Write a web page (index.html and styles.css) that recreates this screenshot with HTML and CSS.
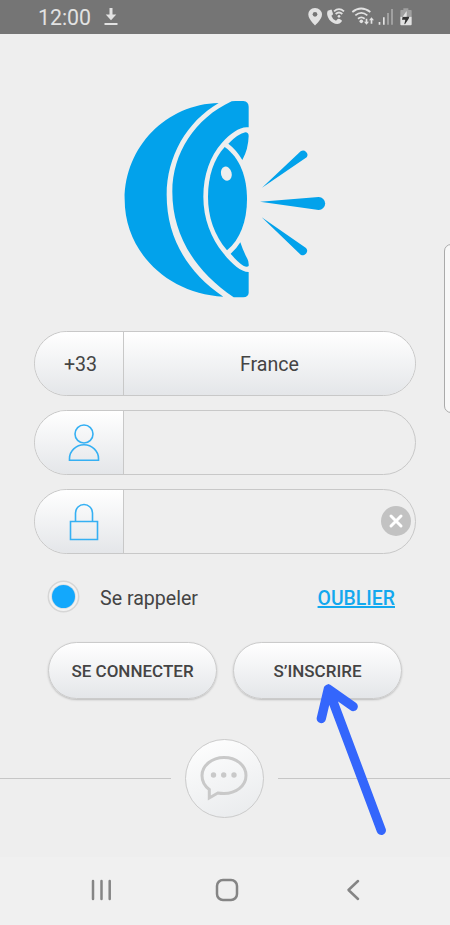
FILE: index.html
```html
<!DOCTYPE html>
<html lang="fr">
<head>
<meta charset="utf-8">
<title>Connexion</title>
<link rel="stylesheet" href="styles.css">
</head>
<body>
<div class="screen">
  <header class="status">
    <span class="clock">12:00</span>
    <svg class="download" width="14" height="20" viewBox="0 0 14 20"><path d="M5.500 1h3v6.500h3.800L7 13.300 1.700 7.500h3.800z"/><path d="M.5 16h13v2H.5z"/></svg>
    <svg class="indicators" width="130" height="34" viewBox="0 0 390 102">
      <path d="M75 24C62 24 55 33 55 44C55 57 75 76 75 76S96 57 96 44C96 33 87 24 75 24Z"/>
      <circle class="hole" cx="75" cy="43" r="7"/>
      <path d="M113 32L122 29Q125 28 126 32L129 41Q130 44 124 47Q127 57 138 62L143 57Q146 55 149 57L155 61Q157 63 154 66Q149 72 142 72Q128 71 118 59Q108 44 113 32Z"/>
      <g class="waves"><path d="M132 34Q147 21 162 34M137 42Q147 33 157 42"/><path d="M187 36Q213 15 241 36M196 46Q214 31 232 46M204 56Q214 48 224 56"/></g>
      <circle cx="147" cy="49" r="4"/><circle cx="214" cy="64" r="5.500"/>
      <path d="M227 56h5v9h5l-7.500 9-7.500-9h5zM242 71h5V61h5l-7.500-9-7.500 9h5z"/>
      <path d="M266 66h5v8h-5zM279 52h5v22h-5z"/>
      <path class="dim" d="M291 39h6v35h-6zM303 27h6v47h-6zM340 25h15v5h8q2 0 2 2v18h-34V32q0-2 2-2h7z"/>
      <path d="M331 50h34v23q0 3-3 3h-28q-3 0-3-3z"/>
      <path class="bolt" d="M338 50h20l-2 6-11 17-2-1 3-13h-10z"/><path d="M350 33l-12 17h12z"/>
    </svg>
  </header>
  <main>
    <svg class="logo" width="230" height="220" viewBox="0 0 690 660">
      <path d="M326 39C170 42 44 170 44 328C44 488 175 612 340 620C229 545 170 440 170 315C170 200 230 95 326 39Z"/>
      <path d="M365 34Q370 33 376 33H400Q416 35 416 50V112C392 108 362 129 336 158C300 198 280 255 280 320C280 385 303 445 340 490C365 521 392 546 416 546V609Q415 621 400 622H371C250 540 187 430 187 305C187 190 255 85 365 34Z"/>
      <path d="M344 171C390 203 411 262 411 328C411 393 390 450 351 481C312 434 294 380 294 320C294 260 311 207 344 171Z"/>
      <path d="M355 161Q385 131 406 127Q416 127 416 138Q415 177 397 210Q380 180 355 161Z"/>
      <path d="M362 491Q380 476 391 457Q400 485 412 506Q417 514 416 528Q411 533 400 527Q382 516 362 491Z"/>
      <ellipse class="glint" cx="349" cy="251" rx="16" ry="21.500" transform="rotate(-15 349 251)"/>
      <path d="M456 293L572 184A13 13 0 0 1 590 202Z"/>
      <path d="M450 335L626 321A19.500 19.500 0 1 1 626 360Z"/>
      <path d="M455 382L588 474A13 13 0 0 1 572 494Z"/>
    </svg>
    <div class="fields">
      <div class="field filled"><div class="lead">+33</div><div class="value">France</div></div>
      <div class="field"><div class="lead"><svg width="32" height="38" viewBox="0 0 32 38"><circle cx="16" cy="10" r="9"/><path d="M1.500 36.200v-1.700a14.500 13.700 0 0 1 29 0v1.700z"/></svg></div><div class="value"></div></div>
      <div class="field"><div class="lead"><svg width="32" height="38" viewBox="0 0 32 38"><path d="M7.500 18.500V10a8.500 8.500 0 0 1 17 0v8.500M2.500 18.500h27v18h-27z"/></svg></div><div class="value"></div>
        <svg class="clear" width="30" height="30" viewBox="0 0 30 30"><circle cx="15" cy="15" r="15"/><path d="M10 10l10 10M20 10L10 20"/></svg>
      </div>
    </div>
    <div class="options">
      <svg class="radio" width="34" height="34" viewBox="0 0 34 34"><circle class="rim" cx="16.500" cy="16.500" r="15.200"/><circle class="halo" cx="16.500" cy="16.500" r="12.300"/><circle class="dot" cx="16.500" cy="16.500" r="11.500"/></svg>
      <span class="remember">Se rappeler</span><a class="forgot">OUBLIER</a>
    </div>
    <div class="actions"><div class="button">SE CONNECTER</div><div class="button">S’INSCRIRE</div></div>
    <div class="chat-row">
      <span class="rule"></span>
      <div class="chat"><svg width="50" height="48" viewBox="0 0 50 48"><path d="M10.300 34.500V43l8.500-5Q21.500 38.500 25 38.500C37 38.500 47 30.800 47 20.500S37 2.500 25 2.500S3 10.500 3 20.500Q3 29 10.300 34.500Z"/><circle cx="14.500" cy="20" r="2.700"/><circle cx="24.700" cy="20" r="2.700"/><circle cx="35" cy="20" r="2.700"/></svg></div>
      <span class="rule"></span>
    </div>
  </main>
  <nav>
    <svg width="22" height="24" viewBox="0 0 22 24"><path d="M3 3v18M11.500 3v18M19.700 3v18"/></svg>
    <svg class="home" width="24" height="24" viewBox="0 0 24 24"><rect x="2" y="2" width="20" height="20" rx="6"/></svg>
    <svg width="14" height="24" viewBox="0 0 14 24"><path d="M12 3L2.500 12l9.500 9"/></svg>
  </nav>
  <div class="edge-panel"></div>
  <svg class="pointer" width="80" height="160" viewBox="0 0 80 160"><path d="M71.300 149.300L18.300 8L11.300 37.500M18.300 8L43.200 25.500"/></svg>
</div>
</body>
</html>
```

FILE: styles.css
```css
* { box-sizing: border-box; }
body { margin: 0; background: #eee; font-family: Roboto, sans-serif; color: #444; }
svg { display: block; flex: none; }
.screen { position: relative; width: 450px; height: 925px; overflow: hidden; display: flex; flex-direction: column; }
.status { height: 34px; flex: none; background: #757575; display: flex; align-items: center; padding-left: 38px; color: #e2e2e2; }
.clock { font-size: 21.300px; line-height: 34px; width: 66px; padding-top: 1px; }
.status svg { fill: #e2e2e2; }
.download { margin-top: -1px; }
.indicators { margin-left: auto; margin-right: 30px; }
.indicators .hole { fill: #757575; }
.indicators .dim { fill: #a0a0a0; }
.indicators .bolt { fill: #333; }
.indicators .waves { fill: none; stroke: #e2e2e2; stroke-width: 5.500; }
main { flex: 1; }
.logo { margin: 56px 0 0 110px; fill: #02a2eb; }
.glint { fill: #eee; }
.fields { margin: 21px 34px 0; display: flex; flex-direction: column; gap: 14px; }
.field { position: relative; height: 65px; display: flex; border: 1.500px solid #c8c8c8; border-radius: 33px; overflow: hidden; font-size: 19.600px; }
.lead { width: 89px; border-right: 1px solid #c8c8c8; background: linear-gradient(#fff, #e4e6e9); display: flex; align-items: center; justify-content: center; padding: 2px 0 0 3px; }
.lead svg { margin: -1px 0 0 7px; fill: none; stroke: #35b0f3; stroke-width: 1.600; }
.value { flex: 1; display: flex; align-items: center; justify-content: center; padding-top: 2px; }
.filled .value { background: linear-gradient(#fff, #e4e6e9); }
.clear { position: absolute; right: 4px; top: 16px; fill: #c2c2c2; stroke: none; }
.clear path { stroke: #fff; stroke-width: 3; stroke-linecap: round; }
.options { margin: 26px 55px 0 47px; height: 34px; display: flex; align-items: center; font-size: 19.600px; }
.rim { fill: #f2f2f2; stroke: #d6d6d6; stroke-width: 1.500; }
.halo { fill: #d3dde3; }
.dot { fill: #13a8fc; }
.remember { margin-left: 19px; padding-top: 2px; }
.forgot { margin-left: auto; padding-top: 3px; color: #13a8ee; font-weight: 500; font-size: 19.400px; text-decoration: underline; text-decoration-thickness: 1.500px; text-underline-offset: 1px; }
.actions { margin: 28px 48px 0; display: flex; gap: 16px; }
.button { flex: 1; height: 57px; border: 1px solid #cbcbcb; border-radius: 29px; background: linear-gradient(#fff, #e4e6e9); box-shadow: 0 1px 2px #bbb; display: flex; align-items: center; justify-content: center; font-size: 17px; font-weight: 500; }
.chat-row { margin-top: 40px; display: flex; align-items: center; justify-content: space-between; }
.rule { width: 171px; height: 1px; background: #c6c6c6; }
.rule:last-child { width: 172px; }
.chat { width: 79px; height: 79px; border: 1px solid #cbcbcb; border-radius: 50%; background: linear-gradient(160deg, #fff, #e8eaec); display: flex; align-items: center; justify-content: center; }
.chat svg { fill: #c9c9c9; margin-right: 1px; }
.chat path { fill: none; stroke: #c9c9c9; stroke-width: 3; }
nav { height: 68px; flex: none; background: #f0f0f0; display: flex; align-items: center; justify-content: space-between; padding: 0 90px 3px; }
nav svg { fill: none; stroke: #858585; stroke-width: 2.500; stroke-linecap: round; stroke-linejoin: round; }
nav .home { margin: 0 2px 0 -2px; }
.edge-panel { position: absolute; left: 444px; top: 244px; width: 20px; height: 169px; border: 1px solid #aaa; border-radius: 7px; background: #f8f8f8; }
.pointer { position: absolute; left: 310px; top: 681px; fill: none; stroke: #3466fc; stroke-width: 9.300; stroke-linecap: round; stroke-linejoin: round; }
```
